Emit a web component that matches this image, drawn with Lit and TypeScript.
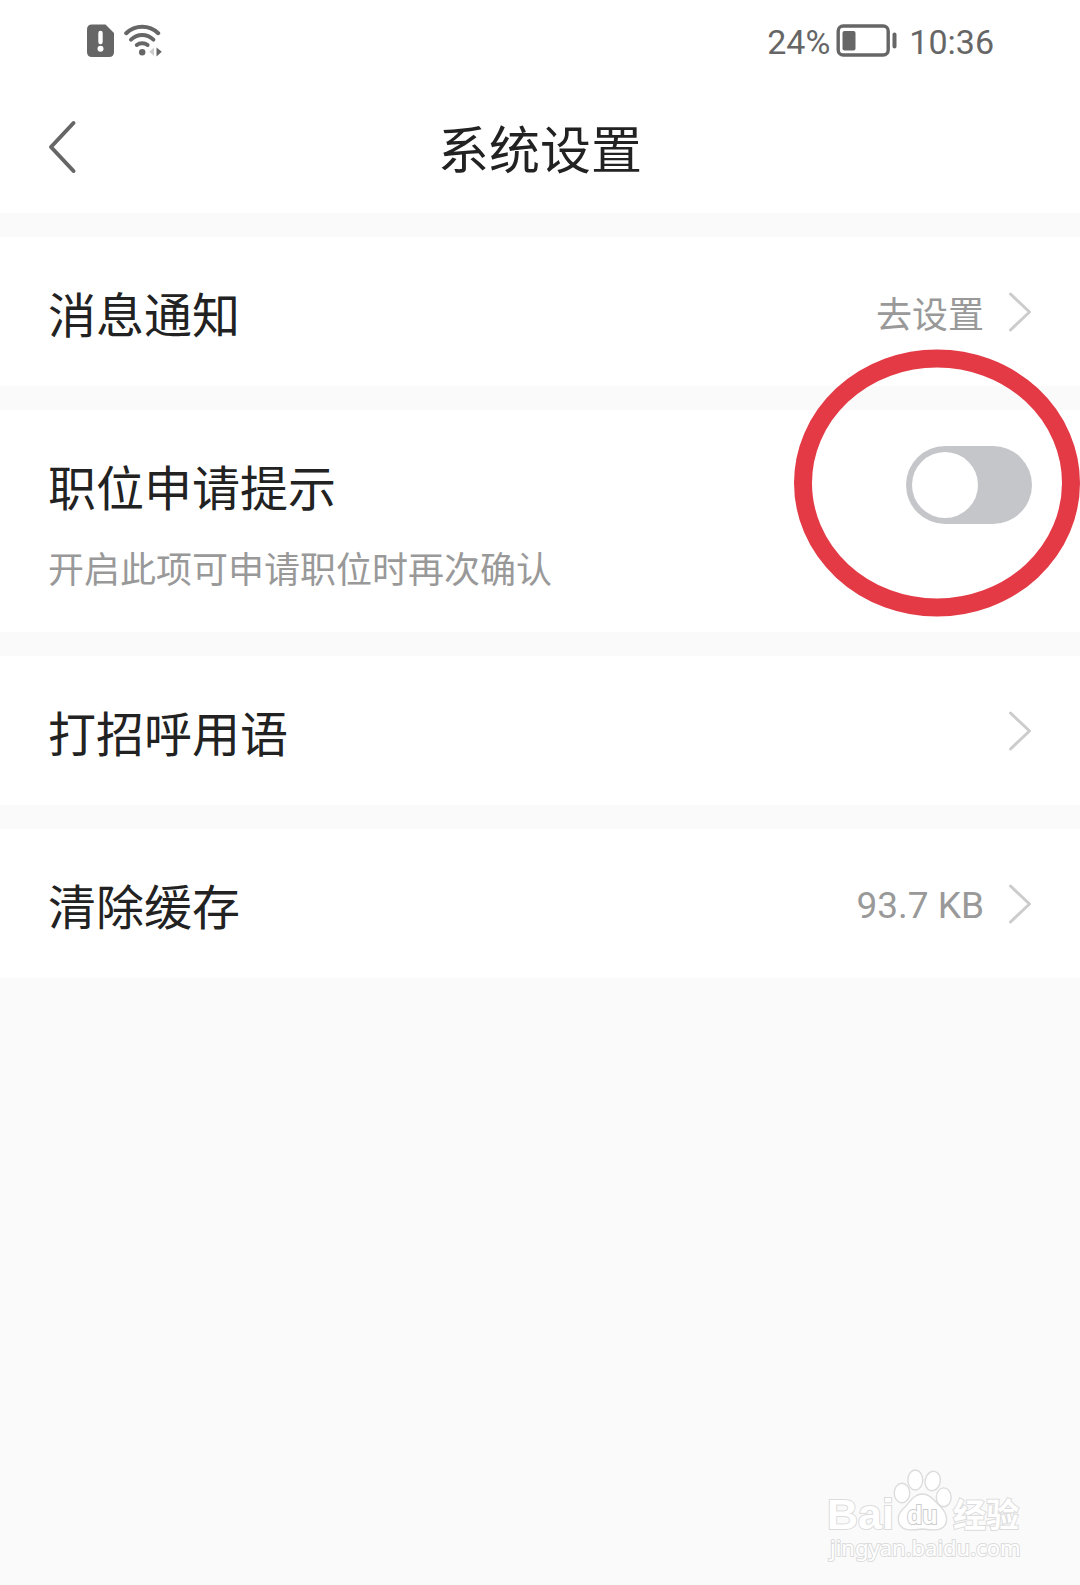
import { LitElement, html, css, svg, nothing } from "lit";
import { customElement, property, state } from "lit/decorators.js";

@customElement("status-bar")
class StatusBar extends LitElement {
  static styles = css`
    :host {
      display: flex;
      align-items: center;
      justify-content: space-between;
      height: 81px;
      padding: 0 86px;
      box-sizing: border-box;
      color: #666;
      font-size: 34px;
      line-height: 42px;
      font-family: Roboto, "Noto Sans CJK SC", sans-serif;
    }
    .group {
      display: flex;
      align-items: center;
    }
    .left {
      gap: 9px;
    }
    .right {
      gap: 6px;
    }
    .text {
      padding-top: 2px;
    }
    .time {
      margin-left: 6px;
    }
    svg {
      display: block;
    }
  `;

  render() {
    return html`
      <div class="group left">
        <svg width="29" height="34" viewBox="0 0 29 34" role="img" aria-label="SIM">
          <path d="M6 .5H19.5L28 9V28Q28 33 23 33H6Q1 33 1 28V5.500Q1 .5 6 .5Z" fill="#666" />
          <path d="M14.5 9V18" stroke="#fff" stroke-width="4.4" stroke-linecap="round" />
          <circle cx="14.5" cy="24.800" r="3" fill="#fff" />
        </svg>
        <svg width="40" height="34" viewBox="0 0 40 34" role="img" aria-label="Wi-Fi">
          <g fill="none" stroke="#666" stroke-width="4" stroke-linecap="round">
            <path d="M2.2 9.200Q9 2.700 18.200 2.700T34.200 9.200" />
            <path d="M7 15.600Q12 11 18.200 11T29.400 15.600" />
            <path d="M12.800 21Q15 19.200 18.200 19.200T23.600 21" />
          </g>
          <circle cx="18.2" cy="28.300" r="3.200" fill="#666" />
          <path d="M30 23.500V32L25.200 27.800Z" fill="#ccc" />
          <path d="M32.500 23.500V32.500L37.800 27.800Z" fill="#666" />
        </svg>
      </div>
      <div class="group right">
        <span class="text">24%</span>
        <svg width="61" height="34" viewBox="0 0 61 34" role="img" aria-label="24%">
          <rect x="2.2" y="2" width="50" height="29" rx="5" fill="none" stroke="#666" stroke-width="3.4" />
          <rect x="6.5" y="7" width="13" height="19.5" rx="2" fill="#666" />
          <rect x="56.5" y="8.500" width="4" height="16" rx="2" fill="#666" />
        </svg>
        <span class="text time">10:36</span>
      </div>
    `;
  }
}

@customElement("settings-row")
class SettingsRow extends LitElement {
  @property() label = "";
  @property() value = "";

  static styles = css`
    :host {
      display: block;
      background: #fff;
    }
    .row {
      display: flex;
      align-items: center;
      gap: 24px;
      width: 100%;
      min-height: 149px;
      padding: 0 48px;
      border: 0;
      background: none;
      color: #222;
      font-family: "Noto Sans CJK SC", sans-serif;
      text-align: left;
      cursor: pointer;
    }
    .label {
      flex: 1;
      font-size: 48px;
      line-height: 72px;
    }
    .value {
      color: #999;
      font-size: 36px;
      line-height: 54px;
    }
    .latin {
      font-size: 37px;
      font-family: Roboto, sans-serif;
    }
    svg {
      display: block;
    }
  `;

  render() {
    const latin = /^[\x20-\x7e]+$/.test(this.value);
    return html`
      <button class="row" type="button">
        <span class="label">${this.label}</span>
        ${this.value
          ? html`<span class="value"><span class=${latin ? "latin" : "cjk"}>${this.value}</span></span>`
          : nothing}
        <svg width="24" height="40" viewBox="0 0 24 40" aria-hidden="true">
          <path d="M2.5 2L21.5 20L2.5 38" fill="none" stroke="#ccc" stroke-width="3" stroke-linecap="round" stroke-linejoin="round" />
        </svg>
      </button>
    `;
  }
}

@customElement("switch-row")
class SwitchRow extends LitElement {
  @property() label = "";
  @property() hint = "";
  @state() private on = false;

  static styles = css`
    :host {
      display: block;
      position: relative;
      background: #fff;
      color: #222;
      font-family: "Noto Sans CJK SC", sans-serif;
    }
    .body {
      padding: 36px 48px 38px;
    }
    .head {
      display: flex;
      align-items: center;
      justify-content: space-between;
      height: 78px;
    }
    .label {
      font-size: 48px;
      line-height: 72px;
    }
    .hint {
      margin: 16px 0 0;
      color: #999;
      font-size: 36px;
      line-height: 54px;
    }
    .switch {
      appearance: none;
      display: flex;
      align-items: center;
      width: 126px;
      height: 78px;
      margin: 0;
      padding: 6px;
      box-sizing: border-box;
      border-radius: 39px;
      background: #c5c6ca;
      cursor: pointer;
    }
    .switch::before {
      content: "";
      width: 66px;
      height: 66px;
      border-radius: 50%;
      background: #fff;
    }
    .switch:checked {
      justify-content: flex-end;
      background: #3c8cff;
    }
    .ring {
      position: absolute;
      top: -61px;
      right: 0;
      z-index: 1;
      pointer-events: none;
    }
  `;

  render() {
    return html`
      <div class="body">
        <div class="head">
          <label class="label" for="toggle">${this.label}</label>
          <input
            class="switch"
            id="toggle"
            type="checkbox"
            role="switch"
            aria-describedby="hint"
            .checked=${this.on}
            @change=${(e: Event) => (this.on = (e.target as HTMLInputElement).checked)}
          />
        </div>
        <p class="hint" id="hint">${this.hint}</p>
      </div>
      <svg class="ring" width="286" height="268" viewBox="0 0 286 268" aria-hidden="true">
        <ellipse cx="143" cy="134" rx="134" ry="124.5" fill="none" stroke="#e33a45" stroke-width="18" />
      </svg>
    `;
  }
}

@customElement("baidu-mark")
class BaiduMark extends LitElement {
  static styles = css`
    :host {
      display: block;
    }
    svg {
      display: block;
      overflow: visible;
    }
    .shape {
      fill: #fff;
      stroke: #dcdcdc;
      stroke-width: 1.4;
    }
    .text {
      fill: #fff;
      stroke: #dcdcdc;
      stroke-width: 2;
      paint-order: stroke;
      font-weight: 700;
      font-family: "Liberation Sans", sans-serif;
    }
    .bai {
      font-size: 43px;
    }
    .du {
      font-size: 25px;
      stroke: #ccc;
    }
    .cn {
      font-size: 33px;
      font-family: "Noto Sans CJK SC", sans-serif;
    }
    .url {
      font-size: 22px;
      font-weight: 400;
      font-family: "Noto Sans", sans-serif;
    }
  `;

  render() {
    const toes = [
      [74, 24, 7.8, 9.8, 0],
      [87.3, 11, 7.4, 10, 0],
      [104.7, 12, 7.6, 9.8, 12],
      [115.7, 28.3, 7.4, 9.4, 0],
    ];
    return html`
      <svg width="194" height="92" viewBox="0 0 194 92" role="img" aria-label="Baidu">
        ${toes.map(
          ([x, y, rx, ry, a]) =>
            svg`<ellipse class="shape" cx=${x} cy=${y} rx=${rx} ry=${ry} transform="rotate(${a} ${x} ${y})" />`
        )}
        <path
          class="shape"
          d="M94 25C86 25 82 33 77 38C71 43 69 48 71 54C74 63 85 61 94 60C104 61 115 63 118 54C120 47 117 42 112 37C106 32 103 25 94 25Z"
        />
        <text class="text bai" x="-1" y="60">Bai</text>
        <text class="text du" x="79" y="55">du</text>
        <text class="text cn" x="125" y="58">经验</text>
        <text class="text url" x="2" y="87">jingyan.baidu.com</text>
      </svg>
    `;
  }
}

@customElement("app-root")
class AppRoot extends LitElement {
  static styles = css`
    :host {
      display: flex;
      flex-direction: column;
      min-height: 100vh;
      background: #fafafa;
      font-family: "Noto Sans CJK SC", sans-serif;
    }
    .top {
      background: #fff;
    }
    .nav {
      display: grid;
      grid-template-columns: 1fr auto 1fr;
      align-items: center;
      height: 132px;
      padding: 0 47px;
    }
    .back {
      justify-self: start;
      padding: 0;
      border: 0;
      background: none;
      cursor: pointer;
    }
    .back svg {
      display: block;
    }
    .title {
      margin: 0;
      color: #222;
      font-size: 51px;
      font-weight: 400;
      line-height: 78px;
    }
    .list {
      display: flex;
      flex-direction: column;
      gap: 24px;
      padding-top: 24px;
    }
    .foot {
      display: flex;
      justify-content: flex-end;
      margin-top: auto;
      padding: 24px 58px 24px;
    }
  `;

  render() {
    return html`
      <header class="top">
        <status-bar></status-bar>
        <div class="nav">
          <button class="back" type="button" aria-label="返回">
            <svg width="30" height="54" viewBox="0 0 30 54">
              <path d="M26.5 3L4 27L26.5 51" fill="none" stroke="#666" stroke-width="4" stroke-linecap="round" stroke-linejoin="round" />
            </svg>
          </button>
          <h1 class="title">系统设置</h1>
        </div>
      </header>
      <main class="list">
        <settings-row label="消息通知" value="去设置"></settings-row>
        <switch-row label="职位申请提示" hint="开启此项可申请职位时再次确认"></switch-row>
        <settings-row label="打招呼用语"></settings-row>
        <settings-row label="清除缓存" value="93.7 KB"></settings-row>
      </main>
      <footer class="foot"><baidu-mark></baidu-mark></footer>
    `;
  }
}
